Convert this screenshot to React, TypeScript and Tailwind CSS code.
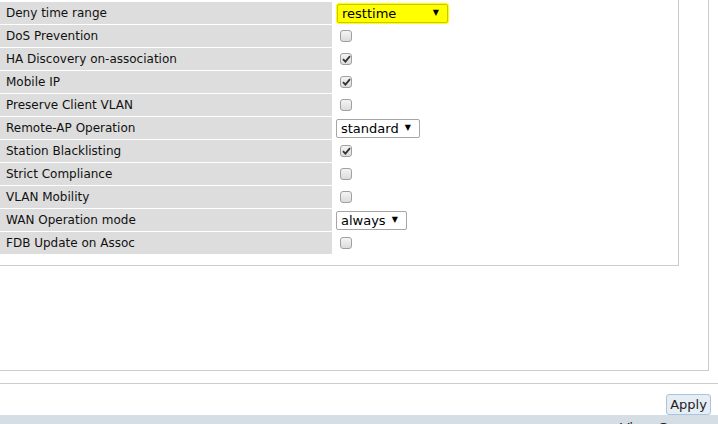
import React from "react";

type Row = {
  label: string;
  kind: "check" | "select";
  checked?: boolean;
  value?: string;
  width?: string;
  highlight?: boolean;
};

const rows: Row[] = [
  { label: "Deny time range", kind: "select", value: "resttime", width: "w-[111px]", highlight: true },
  { label: "DoS Prevention", kind: "check" },
  { label: "HA Discovery on-association", kind: "check", checked: true },
  { label: "Mobile IP", kind: "check", checked: true },
  { label: "Preserve Client VLAN", kind: "check" },
  { label: "Remote-AP Operation", kind: "select", value: "standard", width: "w-[84px]" },
  { label: "Station Blacklisting", kind: "check", checked: true },
  { label: "Strict Compliance", kind: "check" },
  { label: "VLAN Mobility", kind: "check" },
  { label: "WAN Operation mode", kind: "select", value: "always", width: "w-[71px]" },
  { label: "FDB Update on Assoc", kind: "check" },
];

const Checkbox = ({ checked }: { checked?: boolean }) => (
  <div className="ml-[8px] w-[12px] h-[12px] rounded-[3px] border border-[#a0a0a0] bg-gradient-to-b from-[#f4f4f4] to-[#dcdcdc] flex items-center justify-center">
    {checked && (
      <svg width="9" height="8" viewBox="0 0 9 8">
        <path d="M1 4.2 L3.4 6.6 L8 1.2" fill="none" stroke="#333" strokeWidth="1.8" />
      </svg>
    )}
  </div>
);

const Select = ({ value, width, highlight }: { value?: string; width?: string; highlight?: boolean }) => (
  <div className={`relative ml-[4px] ${highlight ? "bg-[#ffff00] rounded-[3px] px-[1px] py-[1px] -my-[1px]" : ""}`}>
    <div
      className={`${width} h-[19px] flex items-center justify-between pl-[4px] pr-[8px] border rounded-[2px] text-[13px] text-black ${
        highlight ? "border-[#c8c800] bg-[#ffff00]" : "border-[#a6a6a6] bg-white"
      }`}
    >
      <span className="leading-none">{value}</span>
      <span className="text-[8px] leading-none">▼</span>
    </div>
  </div>
);

const App = () => {
  return (
    <div
      className="w-[718px] h-[424px] overflow-hidden bg-white flex flex-col"
      style={{ fontFamily: '"DejaVu Sans", Verdana, sans-serif' }}
    >
      {/* outer panel */}
      <div className="w-[709px] h-[371px] border-r border-b border-[#cccccc] shrink-0">
        {/* inner panel */}
        <div className="w-[679px] h-[266px] border-r border-b border-[#cccccc] pt-[2px] flex flex-col gap-[1px]">
          {rows.map((r) => (
            <div key={r.label} className="flex h-[22px]">
              <div className="w-[332px] bg-[#dddddd] flex items-center pl-[6px] text-[12px] text-[#111]">
                {r.label}
              </div>
              <div className="flex-1 flex items-center">
                {r.kind === "check" ? (
                  <Checkbox checked={r.checked} />
                ) : (
                  <Select value={r.value} width={r.width} highlight={r.highlight} />
                )}
              </div>
            </div>
          ))}
        </div>
      </div>

      <div className="h-[12px] shrink-0" />
      <div className="border-t border-[#cccccc] shrink-0" />

      {/* apply */}
      <div className="flex justify-end pr-[7px] pt-[10px] h-[31px] shrink-0">
        <button className="w-[45px] h-[21px] rounded-[3px] border border-[#a9c4dc] bg-[#e6edf4] text-[13px] text-[#222] leading-none">
          Apply
        </button>
      </div>

      {/* bottom bar */}
      <div className="flex-1 bg-[#d5dde5] relative overflow-hidden">
        <div className="absolute left-[620px] top-[3px] text-[14px] text-[#222] whitespace-nowrap">View Command</div>
      </div>
    </div>
  );
};

export default App;
